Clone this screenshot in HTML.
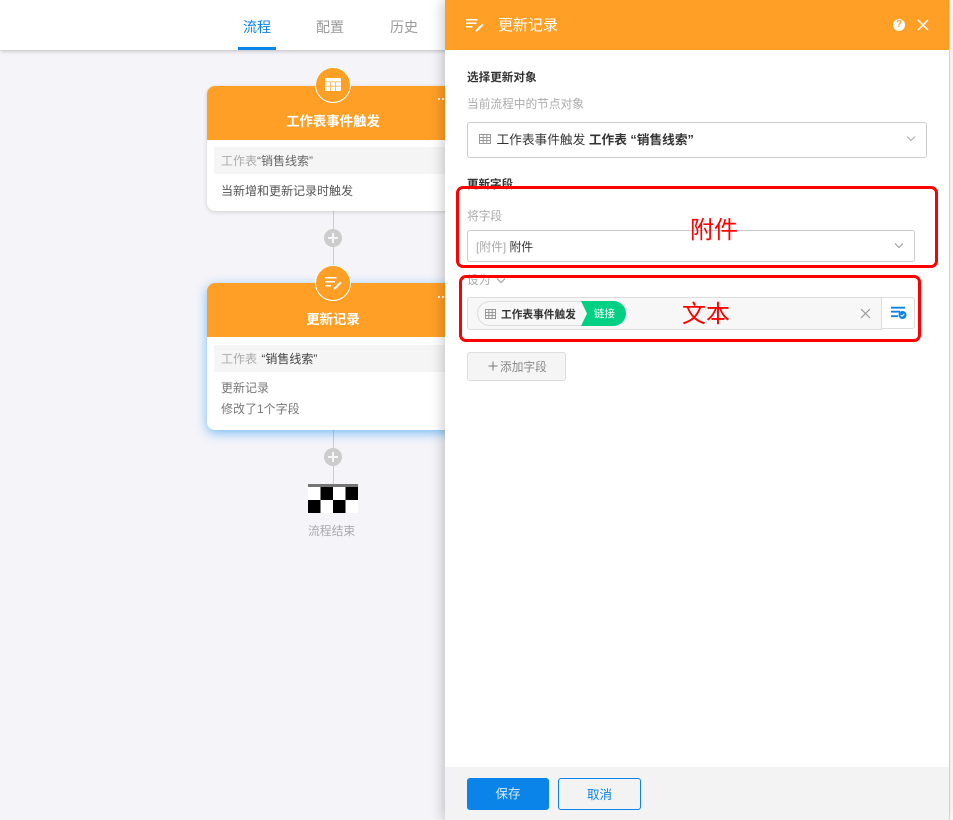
<!DOCTYPE html>
<html lang="zh">
<head>
<meta charset="utf-8">
<title>更新记录</title>
<style>
html,body{margin:0;padding:0;width:953px;height:820px;overflow:hidden;background:#f4f4f9;font-family:"Liberation Sans","Noto Sans CJK SC",sans-serif;color:#333}
*{box-sizing:border-box}
.a{position:absolute;white-space:nowrap}
.nav{position:absolute;left:0;top:0;width:953px;height:50px;background:#fff;box-shadow:0 1px 4px rgba(0,0,0,.24)}
.tab{position:absolute;top:18px;font-size:14px;line-height:18px;color:#999}
.line{position:absolute;left:333px;width:1px;background:#ccc}
.card{position:absolute;left:207px;width:252px;background:#fff;border-radius:8px;overflow:hidden}
.head{position:absolute;left:0;top:0;width:100%;height:54px;background:#ff9f26;color:#fff;font-size:13.400px;font-weight:bold;text-align:center;padding-top:26px;line-height:20px;padding-right:0}
.bar{position:absolute;left:7px;width:240px;height:27px;background:#f5f5f5;font-size:12px;line-height:29px;padding-left:7px;color:#aaa;white-space:nowrap}
.circle{position:absolute;left:315px;width:36px;height:36px;border-radius:50%;background:#ff9f26;border:1.5px solid #fff}
.plus{position:absolute;left:324px;width:18px;height:18px;border-radius:50%;background:#ccc}
.plus:before{content:"";position:absolute;left:4px;top:8px;width:10px;height:2px;background:#f4f4f9}
.plus:after{content:"";position:absolute;left:8px;top:4px;width:2px;height:10px;background:#f4f4f9}
.dots{position:absolute;left:438px;width:9px;height:2px;background:radial-gradient(circle at 1px 1px,#fff 1px,transparent 1.2px) 0 0/4px 2px repeat-x}
.panel{position:absolute;left:445px;top:0;width:504px;height:820px;background:#fff;box-shadow:-2px 0 12px rgba(0,0,0,.22)}
.ph{position:absolute;left:0;top:0;width:504px;height:50px;background:#ff9f26}
.sel{position:absolute;background:#fff;border:1px solid #ccc;border-radius:3px}
.red{position:absolute;border:3px solid #f00;border-radius:7px}
.rt{position:absolute;color:#f00;font-size:24px;line-height:28px;white-space:nowrap;font-family:"Noto Sans CJK SC",sans-serif;font-weight:400}
</style>
</head>
<body>
<div class="nav">
  <div class="tab" style="left:243px;color:#0a84e8">流程</div>
  <div class="tab" style="left:316px">配置</div>
  <div class="tab" style="left:390px">历史</div>
  <div class="a" style="left:238px;top:47px;width:38px;height:3px;background:#0a84e8"></div>
</div>

<div class="line" style="top:211px;height:72px"></div>
<div class="line" style="top:430px;height:55px"></div>

<div class="card" style="top:86px;height:125px;box-shadow:0 1px 4px rgba(0,0,0,.16)">
  <div class="head">工作表事件触发</div>
  <div class="bar" style="top:61px">工作表<span style="color:#666">“销售线索”</span></div>
  <div class="a" style="left:14px;top:96px;font-size:12px;line-height:18px;color:#555">当新增和更新记录时触发</div>
</div>
<div class="dots" style="top:98px"></div>
<div class="circle" style="top:67px"></div>
<svg class="a" style="left:325px;top:78px" width="16" height="13" viewBox="0 0 16 13"><rect width="16" height="13" rx="1" fill="#fff"/><path stroke="#ff9f26" stroke-width=".9" opacity=".75" d="M0 3.800h16M0 8.200h16M5.500 3.800V13M10.500 3.800V13"/></svg>

<div class="plus" style="top:229px"></div>

<div class="card" style="top:283px;height:147px;box-shadow:0 3px 11px rgba(33,150,243,.6)">
  <div class="head" style="padding-top:27px">更新记录</div>
  <div class="bar" style="top:62px">工作表 <span style="color:#444;margin-left:1px">“销售线索”</span></div>
  <div class="a" style="left:14px;top:96px;font-size:12px;line-height:18px;color:#777">更新记录</div>
  <div class="a" style="left:14px;top:117px;font-size:12px;line-height:18px;color:#777">修改了1个字段</div>
</div>
<div class="dots" style="top:296px"></div>
<div class="circle" style="top:265px"></div>
<svg class="a" style="left:325px;top:276px" width="18" height="14" viewBox="0 0 18 14"><path fill="#fff" d="M0 1h11.500v1.500H0zM0 5h10v1.500H0zM0 9h6v1.500H0z"/><path fill="#fff" d="M15.200 5.600l1.500 1.400-6 6-2.200.6.600-2.100z"/></svg>

<div class="plus" style="top:448px"></div>

<svg class="a" style="left:308px;top:484px" width="50" height="29" viewBox="0 0 50 29" shape-rendering="crispEdges">
<rect width="50" height="3" fill="#757575"/>
<rect y="3" width="12.500" height="13" fill="#fff"/><rect x="12.500" y="3" width="12.500" height="13" fill="#000"/><rect x="25" y="3" width="12.500" height="13" fill="#fff"/><rect x="37.500" y="3" width="12.500" height="13" fill="#000"/>
<rect y="16" width="12.500" height="13" fill="#000"/><rect x="12.500" y="16" width="12.500" height="13" fill="#fff"/><rect x="25" y="16" width="12.500" height="13" fill="#000"/><rect x="37.500" y="16" width="12.500" height="13" fill="#fff"/>
</svg>
<div class="a" style="left:308px;top:522px;font-size:11.800px;line-height:18px;color:#aaa">流程结束</div>

<div class="a" style="left:949px;top:0;width:1px;height:820px;background:#e2e2e2"></div>
<div class="a" style="left:950px;top:0;width:3px;height:820px;background:#fff"></div>

<div class="panel">
  <div class="ph">
    <svg class="a" style="left:21px;top:18px" width="18" height="14" viewBox="0 0 18 14"><path fill="#fff" d="M0 1h11.500v1.500H0zM0 4.500h10.500v1.500H0zM0 8h6.500v1.500H0z"/><path fill="#fff" d="M16.200 5.600l1.500 1.400-6 6-2.200.6.600-2.100z"/></svg>
    <div class="a" style="left:53px;top:15px;font-size:15px;line-height:22px;color:#fff">更新记录</div>
    <div class="a" style="left:448px;top:19px;width:12px;height:12px;border-radius:50%;background:#fff;color:#ff9f26;font-size:10px;line-height:12px;font-weight:bold;text-align:center">?</div>
    <svg class="a" style="left:472px;top:19px" width="12" height="12" viewBox="0 0 12 12"><path stroke="#fff" stroke-width="1.500" d="M1 1l10 10M11 1L1 11"/></svg>
  </div>

  <div class="a" style="left:22px;top:69px;font-size:11.600px;line-height:18px;font-weight:bold;color:#333">选择更新对象</div>
  <div class="a" style="left:22px;top:96px;font-size:11.700px;line-height:18px;color:#aaa">当前流程中的节点对象</div>
  <div class="sel" style="left:22px;top:122px;width:460px;height:36px"></div>
  <svg class="a" style="left:34px;top:134px" width="12" height="10" viewBox="0 0 12 10"><path fill="none" stroke="#999" d="M.5.500h11v9H.5zM.5 3.500h11M.5 6.500h11M4.200 .5v9M7.800 .5v9"/></svg>
  <div class="a" style="left:51.500px;top:131px;font-size:12.700px;line-height:18px;color:#333">工作表事件触发 <b>工作表 “销售线索”</b></div>
  <svg class="a" style="left:461px;top:136px" width="10" height="6" viewBox="0 0 10 6"><path fill="none" stroke="#aaa" d="M1 .5l4 4 4-4"/></svg>

  <div class="a" style="left:22px;top:176px;font-size:11.500px;line-height:18px;font-weight:bold;color:#333">更新字段</div>
  <div class="a" style="left:22px;top:208px;font-size:11.700px;line-height:18px;color:#aaa">将字段</div>
  <div class="sel" style="left:22px;top:230px;width:448px;height:32px"></div>
  <div class="a" style="left:31px;top:238px;font-size:11.800px;line-height:18px;color:#aaa">[附件] <span style="color:#333">附件</span></div>
  <svg class="a" style="left:449px;top:243px" width="10" height="6" viewBox="0 0 10 6"><path fill="none" stroke="#999" d="M1 .5l4 4 4-4"/></svg>

  <div class="a" style="left:22px;top:272px;font-size:11.700px;line-height:18px;color:#aaa">设为</div>
  <svg class="a" style="left:51px;top:278px" width="10" height="6" viewBox="0 0 10 6"><path fill="none" stroke="#999" d="M1 .5l4 4 4-4"/></svg>

  <div class="a" style="left:22px;top:297px;width:415px;height:33px;background:#f7f7f7;border:1px solid #ddd;border-radius:3px 0 0 3px"></div>
  <div class="a" style="left:436px;top:297px;width:34px;height:32px;background:#fff;border:1px solid #ddd;border-radius:0 3px 3px 0"></div>
  <div class="a" style="left:32px;top:301px;width:106px;height:25px;background:#f7f7f7;border:1px solid #ddd;border-right:0;border-radius:13px 0 0 13px"></div>
  <svg class="a" style="left:136px;top:301px" width="46" height="25" viewBox="0 0 46 25"><path fill="#00d084" d="M0 0H32.500a12.500 12.500 0 0 1 0 25H0l6-12.500z"/></svg>
  <svg class="a" style="left:40px;top:309px" width="11" height="10" viewBox="0 0 11 10"><path fill="none" stroke="#999" d="M.5.500h10v9H.5zM.5 3.500h10M.5 6.500h10M3.800 .5v9M7.200 .5v9"/></svg>
  <div class="a" style="left:56px;top:307px;font-size:10.700px;line-height:17px;font-weight:bold;color:#333">工作表事件触发</div>
  <div class="a" style="left:149px;top:306px;font-size:10.500px;line-height:17px;color:#fff">链接</div>
  <svg class="a" style="left:415px;top:308px" width="11" height="11" viewBox="0 0 11 11"><path stroke="#999" stroke-width="1.200" d="M1 1l9 9M10 1l-9 9"/></svg>
  <svg class="a" style="left:446px;top:306px" width="16" height="13" viewBox="0 0 16 13"><path fill="#0a84e8" d="M0 .8h14v1.800H0zM0 4.800h9v1.800H0zM0 9.300h7v1.800H0z"/><circle cx="11.500" cy="9" r="4" fill="#0a84e8"/><path fill="none" stroke="#fff" d="M9.700 9l1.300 1.300 2.300-2.300"/></svg>

  <div class="a" style="left:22px;top:352px;width:99px;height:29px;background:#f5f5f5;border:1px solid #ddd;border-radius:3px"></div>
  <svg class="a" style="left:43px;top:361px" width="10" height="10" viewBox="0 0 10 10"><path stroke="#777" stroke-width="1" d="M5 .5v9M.5 5h9"/></svg>
  <div class="a" style="left:55px;top:359px;font-size:11.700px;line-height:18px;color:#888">添加字段</div>

  <div class="a" style="left:0;top:767px;width:504px;height:53px;background:#f3f3f3"></div>
  <div class="a" style="left:22px;top:778px;width:82px;height:32px;background:#0a84e8;border-radius:3px;color:#d8ecfc;font-size:12.500px;line-height:33px;text-align:center">保存</div>
  <div class="a" style="left:113px;top:778px;width:83px;height:32px;border:1px solid #0a84e8;border-radius:3px;color:#0a84e8;font-size:12.500px;line-height:33px;text-align:center">取消</div>
</div>

<div class="red" style="left:456px;top:186px;width:482px;height:82px"></div>
<div class="red" style="left:459px;top:275px;width:462px;height:67px"></div>
<div class="rt" style="left:690px;top:214px">附件</div>
<div class="rt" style="left:682px;top:298px">文本</div>
</body>
</html>
